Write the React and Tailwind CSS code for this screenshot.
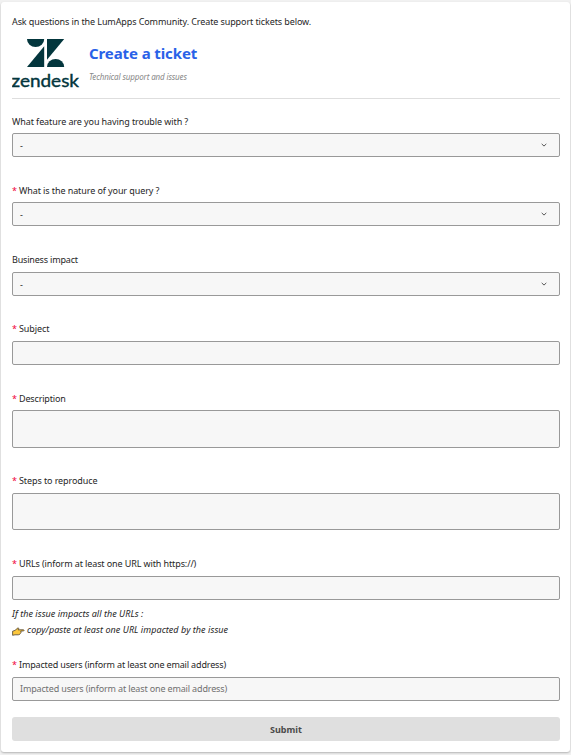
import React from "react";

function Logo() {
  return (
    <svg width="68" height="52" viewBox="0 0 68 52" className="block shrink-0" fill="#03363d">
      <path d="M15 1h17.2a8.6 8.1 0 0 1-17.2 0z" />
      <path d="M32.2 8.2V29H15z" />
      <path d="M35 1h17.2L35 21.8z" />
      <path d="M35 29a8.6 8.1 0 0 1 17.2 0z" />
      <text x="-0.5" y="48.7" fontFamily="Lato, sans-serif" fontWeight="400" fontSize="17.5" stroke="#03363d" strokeWidth="0.4" textLength="67.5" lengthAdjust="spacingAndGlyphs">
        zendesk
      </text>
    </svg>
  );
}

function Chevron() {
  return (
    <svg width="6" height="4" viewBox="0 0 6 4" className="block" fill="none" stroke="#555" strokeWidth="1">
      <path d="M0.7 0.9L3 3.1L5.3 0.9" />
    </svg>
  );
}

function Hand() {
  return (
    <svg width="13" height="9" viewBox="0 0 13 9" className="block shrink-0" strokeLinejoin="round">
      <path d="M0.6 4.2L3 3.4L6 0.8L6.9 1.5L6 2.8H11.6Q12.5 3.4 11.6 4H8.8Q9.6 5.4 8.4 6.4Q7.8 7.8 6.4 7.8H3L0.6 8.3z" fill="#fcc73d" stroke="#4e4130" strokeWidth="0.8" />
    </svg>
  );
}

function Field({ label, required, labelClass = "tracking-[-0.09px]", gapClass = "mt-[5px]", className, boxClass = "h-6", children }) {
  return (
    <div className={className}>
      <div className="flex h-3 items-center whitespace-nowrap leading-3">
        {required && <span className="w-[7px] shrink-0 text-[#f0003c]">*</span>}
        <span className={labelClass}>{label}</span>
      </div>
      <div className={"flex items-center justify-between rounded-[2px] border border-[#999] bg-[#f7f7f7] pr-3 pl-[7px] " + gapClass + " " + boxClass}>
        {children}
      </div>
    </div>
  );
}

function SelectValue() {
  return (
    <>
      <span className="mt-px">-</span>
      <Chevron />
    </>
  );
}

export default function App() {
  return (
    <div className="h-[755px] w-[571px] overflow-hidden bg-[#f1f1f1] px-px pt-[2px] font-['Noto_Sans',sans-serif] text-[9px] text-[#262626]">
      <div className="h-[750px] rounded-[3px] bg-white px-[11px] pt-[14px] shadow-[0_1px_2px_rgba(0,0,0,0.25)]">
        <div className="h-3 whitespace-nowrap leading-3 tracking-[-0.1px]">
          Ask questions in the LumApps Community. Create support tickets below.
        </div>
        <div className="mt-[10px] flex h-[61px] w-[548px] border-b border-[#dedede]">
          <Logo />
          <div className="ml-[9px] whitespace-nowrap">
            <h1 className="mt-[5px] text-[15px] leading-5 font-bold tracking-[-0.1px] text-[#2962e8]">Create a ticket</h1>
            <div className="mt-[8px] text-[8px] leading-3 tracking-[-0.13px] italic text-[#888]">Technical support and issues</div>
          </div>
        </div>
        <form className="w-[548px]">
          <Field className="mt-[17px]" label="What feature are you having trouble with ?">
            <SelectValue />
          </Field>
          <Field className="mt-7" required label="What is the nature of your query ?">
            <SelectValue />
          </Field>
          <Field className="mt-7" gapClass="mt-[6px]" label="Business impact" labelClass="tracking-[-0.18px]">
            <SelectValue />
          </Field>
          <Field className="mt-[27px]" gapClass="mt-[6px]" required label="Subject" />
          <Field className="mt-7" required label="Description" labelClass="tracking-[-0.16px]" boxClass="h-[38px]" />
          <Field className="mt-[27px]" gapClass="mt-[6px]" required label="Steps to reproduce" boxClass="h-[37px]" />
          <Field className="mt-7" gapClass="mt-[6px]" required label="URLs (inform at least one URL with https://)" labelClass="tracking-[-0.11px]" />
          <div className="mt-[6px] whitespace-nowrap italic">
            <div className="h-4 leading-4 tracking-[0.03px]">If the issue impacts all the URLs :</div>
            <div className="flex h-4 items-center leading-4 tracking-[0.06px]">
              <span className="mt-[3px] mr-[2px]"><Hand /></span>
              <span>copy/paste at least one URL impacted by the issue</span>
            </div>
          </div>
          <Field className="mt-[21px]" gapClass="mt-[6px]" required label="Impacted users (inform at least one email address)" labelClass="tracking-[-0.15px]">
            <span className="tracking-[-0.15px] text-[#707070]">Impacted users (inform at least one email address)</span>
          </Field>
          <button type="button" className="mt-4 block h-6 w-full rounded-[3px] bg-[#dfdfdf] pt-px text-center font-bold text-[#4a4a4a]">
            Submit
          </button>
        </form>
      </div>
    </div>
  );
}
